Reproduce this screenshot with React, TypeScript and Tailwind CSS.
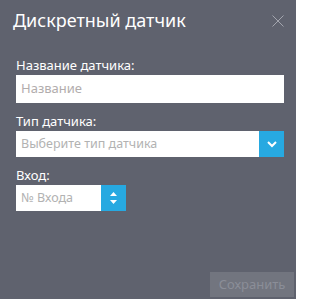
export default function App() {
  return (
    <div
      className="w-[296px] h-[299px] bg-[#5f626e] text-white relative"
      style={{ fontFamily: '"Noto Sans", "Open Sans", sans-serif' }}
    >
      {/* Header */}
      <div className="flex items-start justify-between pl-[13px] pr-[12px] pt-[7px]">
        <h1 className="text-[18px] leading-[26px] font-normal text-white">Дискретный датчик</h1>
        <button className="mt-[8px] text-[#a3a5ae]">
          <svg width="12" height="12" viewBox="0 0 12 12" fill="none" stroke="currentColor" strokeWidth="1">
            <path d="M0.5 0.5 L11.5 11.5 M11.5 0.5 L0.5 11.5" />
          </svg>
        </button>
      </div>

      <div className="pl-4 pr-[12px] pt-[24px]">
        {/* Name */}
        <label className="block text-[13px] leading-[16px] text-white mb-[2px]">Название датчика:</label>
        <div className="h-[28px] bg-white flex items-center px-[5px]">
          <span className="text-[13px] text-[#b2adad]">Название</span>
        </div>

        {/* Type */}
        <label className="block text-[13px] leading-[16px] text-white mt-[10px] mb-[2px]">Тип датчика:</label>
        <div className="h-[26px] bg-white flex items-center">
          <span className="flex-1 pl-[5px] text-[12.5px] text-[#b2b2b2]">Выберите тип датчика</span>
          <div className="w-[25px] h-full bg-[#27a9e1] flex items-center justify-center">
            <svg width="10" height="7" viewBox="0 0 10 7" fill="none" stroke="white" strokeWidth="2">
              <path d="M1 1 L5 5 L9 1" />
            </svg>
          </div>
        </div>

        {/* Input */}
        <label className="block text-[13px] leading-[16px] text-white mt-[10px] mb-[2px]">Вход:</label>
        <div className="h-[26px] w-[110px] bg-white flex items-center">
          <span className="flex-1 pl-[5px] text-[12.5px] text-[#b2b2b2]">№ Входа</span>
          <div className="w-[25px] h-full bg-[#27a9e1] flex flex-col items-center justify-center gap-[4px]">
            <svg width="7" height="4" viewBox="0 0 7 4" fill="white">
              <path d="M3.5 0 L7 4 L0 4 Z" />
            </svg>
            <svg width="7" height="4" viewBox="0 0 7 4" fill="white">
              <path d="M0 0 L7 0 L3.5 4 Z" />
            </svg>
          </div>
        </div>
      </div>

      {/* Footer */}
      <div className="absolute right-[2px] bottom-[2px]">
        <button className="w-[84px] h-[25px] bg-[#72757f] text-[#8b8e98] text-[13px] leading-[25px]">
          Сохранить
        </button>
      </div>
    </div>
  );
}
